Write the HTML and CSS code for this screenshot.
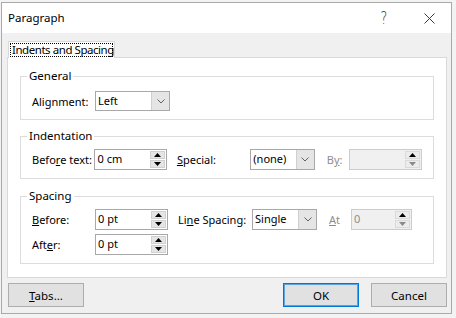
FILE: index.html
```html
<!DOCTYPE html>
<html lang="en">
<head>
<meta charset="utf-8">
<title>Paragraph</title>
<link rel="stylesheet" href="styles.css">
</head>
<body>
<div class="window">
  <div class="titlebar">
    <span class="title">Paragraph</span>
    <span class="help">?</span>
    <span class="close">
      <svg width="11" height="11" viewBox="0 0 11 11"><path d="M0.5 0.5 L10.5 10.5 M10.5 0.5 L0.5 10.5" stroke="#3a3a3a" stroke-width="1" fill="none"/></svg>
    </span>
  </div>
  <div class="client">
    <div class="tabs">
      <div class="tab"><span class="focus">Indents and Spacing</span></div>
    </div>
    <div class="panel">
      <fieldset class="group">
        <legend>General</legend>
        <div class="row first short">
          <span class="lbl">Alignment:</span>
          <div class="select w75"><span class="val">Left</span><span class="drop"><svg width="8" height="5" viewBox="0 0 8 5"><path d="M0.5 0.5 L4 4 L7.5 0.5" stroke="#606060" fill="none"/></svg></span></div>
        </div>
      </fieldset>

      <fieldset class="group">
        <legend>Indentation</legend>
        <div class="row first">
          <span class="lbl">Befo<u>r</u>e text:</span>
          <div class="spin w73"><span class="val">0 cm</span><span class="btns"><span class="sb"><svg width="7" height="4" viewBox="0 0 7 4"><path d="M0 4 L3.5 0 L7 4 Z" fill="#000"/></svg></span><span class="sb"><svg width="7" height="4" viewBox="0 0 7 4"><path d="M0 0 L3.5 4 L7 0 Z" fill="#000"/></svg></span></span></div>
          <span class="lbl2"><u>S</u>pecial:</span>
          <div class="select w65"><span class="val">(none)</span><span class="drop"><svg width="8" height="5" viewBox="0 0 8 5"><path d="M0.5 0.5 L4 4 L7.5 0.5" stroke="#606060" fill="none"/></svg></span></div>
          <span class="lbl3 dis">B<u>y</u>:</span>
          <div class="spin w74 disabled"><span class="val"></span><span class="btns"><span class="sb"><svg width="7" height="4" viewBox="0 0 7 4"><path d="M0 4 L3.5 0 L7 4 Z" fill="#000"/></svg></span><span class="sb"><svg width="7" height="4" viewBox="0 0 7 4"><path d="M0 0 L3.5 4 L7 0 Z" fill="#8a8a8a"/></svg></span></span></div>
        </div>
      </fieldset>

      <fieldset class="group">
        <legend>Spacing</legend>
        <div class="row first">
          <span class="lbl"><u>B</u>efore:</span>
          <div class="spin w73"><span class="val">0 pt</span><span class="btns"><span class="sb"><svg width="7" height="4" viewBox="0 0 7 4"><path d="M0 4 L3.5 0 L7 4 Z" fill="#000"/></svg></span><span class="sb"><svg width="7" height="4" viewBox="0 0 7 4"><path d="M0 0 L3.5 4 L7 0 Z" fill="#000"/></svg></span></span></div>
          <span class="lbl2">Li<u>n</u>e Spacing:</span>
          <div class="select w65"><span class="val">Single</span><span class="drop"><svg width="8" height="5" viewBox="0 0 8 5"><path d="M0.5 0.5 L4 4 L7.5 0.5" stroke="#606060" fill="none"/></svg></span></div>
          <span class="lbl3 dis"><u>A</u>t</span>
          <div class="spin w61 disabled"><span class="val">0</span><span class="btns"><span class="sb"><svg width="7" height="4" viewBox="0 0 7 4"><path d="M0 4 L3.5 0 L7 4 Z" fill="#000"/></svg></span><span class="sb"><svg width="7" height="4" viewBox="0 0 7 4"><path d="M0 0 L3.5 4 L7 0 Z" fill="#8a8a8a"/></svg></span></span></div>
        </div>
        <div class="row second">
          <span class="lbl">Aft<u>e</u>r:</span>
          <div class="spin w73"><span class="val">0 pt</span><span class="btns"><span class="sb"><svg width="7" height="4" viewBox="0 0 7 4"><path d="M0 4 L3.5 0 L7 4 Z" fill="#000"/></svg></span><span class="sb"><svg width="7" height="4" viewBox="0 0 7 4"><path d="M0 0 L3.5 4 L7 0 Z" fill="#000"/></svg></span></span></div>
        </div>
      </fieldset>
    </div>
    <div class="buttons">
      <button class="btn"><u>T</u>abs...</button>
      <span class="spacer"></span>
      <button class="btn default">OK</button>
      <button class="btn">Cancel</button>
    </div>
  </div>
</div>
</body>
</html>
```

FILE: styles.css
```css
* { box-sizing: border-box; }
html, body { margin: 0; padding: 0; }
body {
  width: 456px;
  height: 318px;
  overflow: hidden;
  background: #f3f3f3;
  font-family: "Noto Sans", "Segoe UI", sans-serif;
  font-size: 11px;
  color: #000;
}
u { text-decoration: underline; text-underline-offset: 1px; }

.window {
  margin: 2px 0 0 1px;
  width: 451px;
  height: 312px;
  border: 1px solid #a9a9a9;
  background: #f0f0f0;
  display: flex;
  flex-direction: column;
}

.titlebar {
  height: 30px;
  background: #fff;
  display: flex;
  align-items: center;
  flex: none;
}
.title { padding-left: 6px; font-size: 11.5px; line-height: 16px; }
.help {
  margin-left: auto;
  width: 46px;
  text-align: center;
  font-size: 17px;
  line-height: 18px;
  color: #333;
  font-family: "DejaVu Sans", sans-serif;
  font-weight: 300;
  transform: scaleX(0.75);
}
.close {
  width: 44px;
  display: flex;
  justify-content: center;
  align-items: center;
}
.close svg { display: block; }

.client {
  flex: 1;
  padding: 8px 4px 0 5px;
  display: flex;
  flex-direction: column;
}

.tabs { display: flex; height: 16px; position: relative; z-index: 1; }
.tab {
  margin-left: 1px;
  width: 107px;
  height: 17px;
  background: #fff;
  border: 1px solid #d9d9d9;
  border-bottom: none;
  padding: 1px 0 0 1px;
}
.focus {
  display: block;
  width: 103px;
  height: 14px;
  border: 1px dotted #000;
  line-height: 12px;
  padding-left: 1px;
  white-space: nowrap;
  font-size: 11.5px;
  letter-spacing: -0.45px;
}

.panel {
  height: 221px;
  background: #fff;
  border: 1px solid #d9d9d9;
  padding-top: 10px;
}

.group {
  margin: 0 12px 0 12px;
  padding: 0 11px 8px 11px;
  border: 1px solid #dcdcdc;
  min-width: 0;
}
.group + .group { margin-top: 8px; }
.group:last-child { margin-top: 9px; }
legend {
  padding: 0 2px;
  margin-left: -5px;
  line-height: 16px;
  font-size: 11.5px;
}

.row {
  display: flex;
  align-items: center;
  height: 21px;
}
.row.first { margin-top: 5px; }
.row.short { margin-top: 7px; height: 20px; }
.row.second { margin-top: 4px; }

.lbl { width: 63px; white-space: nowrap; }
.lbl2 { width: 74px; margin-left: 10px; white-space: nowrap; }
.lbl3 { width: 22px; margin-left: 12px; white-space: nowrap; }
.dis { color: #8d8d8d; }

.w73 { width: 73px; }
.w74 { width: 74px; }
.w75 { width: 75px; }
.w65 { width: 65px; }
.w61 { width: 61px; }

.select, .spin {
  height: 100%;
  display: flex;
  border: 1px solid #a8a8a8;
  background: #fff;
}
.val {
  flex: 1;
  padding-left: 2px;
  line-height: 18px;
  white-space: nowrap;
  overflow: hidden;
}
.drop {
  width: 18px;
  background: #e5e5e5;
  border-left: 1px solid #cfcfcf;
  display: flex;
  align-items: center;
  justify-content: center;
}
.drop svg { display: block; }

.btns {
  width: 17px;
  display: flex;
  flex-direction: column;
  padding: 1px;
  gap: 1px;
}
.sb {
  flex: 1;
  background: #e5e5e5;
  border: 1px solid #d0d0d0;
  display: flex;
  align-items: center;
  justify-content: center;
}
.sb svg { display: block; }

.spin.disabled { background: #f0f0f0; border-color: #cccccc; }
.spin.disabled .val { color: #8d8d8d; }
.spin.disabled .sb { background: #ececec; border-color: #dadada; }

.buttons {
  display: flex;
  gap: 12px;
  margin-top: 5px;
  padding-left: 1px;
}
.spacer { flex: 1; }
.btn {
  width: 76px;
  height: 24px;
  background: #e1e1e1;
  border: 1px solid #adadad;
  font-family: inherit;
  font-size: 11.5px;
  color: #000;
  padding: 0;
}
.btn.default {
  border: 1px solid #0078d7;
  box-shadow: inset 0 0 0 1px #5aa3e0;
}
```
